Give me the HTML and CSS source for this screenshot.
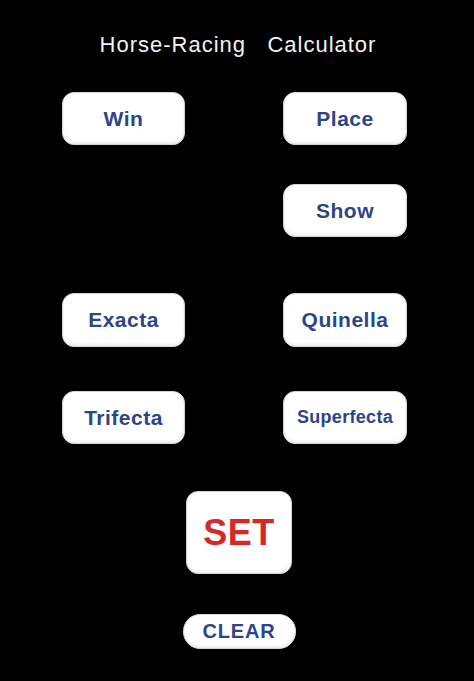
FILE: index.html
```html
<!DOCTYPE html>
<html>
<head>
<meta charset="utf-8">
<link rel="stylesheet" href="styles.css">
</head>
<body>
<main class="app">
  <h1 class="title">Horse-Racing&nbsp;&nbsp; Calculator</h1>
  <div class="row row-1">
    <button class="btn">Win</button>
    <button class="btn">Place</button>
  </div>
  <div class="row row-2">
    <span class="spacer"></span>
    <button class="btn">Show</button>
  </div>
  <div class="row row-3">
    <button class="btn">Exacta</button>
    <button class="btn">Quinella</button>
  </div>
  <div class="row row-4">
    <button class="btn">Trifecta</button>
    <button class="btn btn-small">Superfecta</button>
  </div>
  <div class="center">
    <button class="btn btn-set">SET</button>
    <button class="btn btn-clear">CLEAR</button>
  </div>
</main>
</body>
</html>
```
FILE: styles.css
```css
html, body {
  margin: 0;
  padding: 0;
  background: #000;
  height: 100%;
}

.app {
  width: 474px;
  height: 681px;
  background: #000;
  font-family: "Liberation Sans", Arial, sans-serif;
  display: flex;
  flex-direction: column;
}

.title {
  margin: 32px 0 0 0;
  height: 26px;
  line-height: 26px;
  font-size: 22px;
  letter-spacing: 1px;
  font-weight: normal;
  color: #f2f2f2;
  text-align: center;
  padding-left: 2px;
}

.row {
  display: grid;
  grid-template-columns: 123px 124px;
  column-gap: 98px;
  padding-left: 62px;
  height: 53px;
}

.row-1 { margin-top: 34px; }
.row-2 { margin-top: 39px; }
.row-3 { margin-top: 56px; height: 54px; }
.row-4 { margin-top: 44px; }

.btn {
  background: #fff;
  border: 1px solid #d6d6d6;
  border-radius: 12px;
  color: #2c4586;
  font-family: "Liberation Sans", Arial, sans-serif;
  font-weight: bold;
  font-size: 21px;
  letter-spacing: 0.5px;
  padding: 0;
  margin: 0;
  height: 100%;
  box-shadow: inset 0 -2px 3px rgba(0, 0, 0, 0.08);
}

.btn-small {
  font-size: 18px;
  letter-spacing: 0.3px;
}

.center {
  display: flex;
  flex-direction: column;
  align-items: center;
  padding-left: 4px;
}

.btn-set {
  margin-top: 47px;
  width: 106px;
  height: 83px;
  font-size: 36px;
  letter-spacing: 0.5px;
  color: #d62828;
}

.btn-clear {
  margin-top: 40px;
  width: 113px;
  height: 35px;
  border-radius: 17px;
  font-size: 20px;
  letter-spacing: 0.8px;
}
```
